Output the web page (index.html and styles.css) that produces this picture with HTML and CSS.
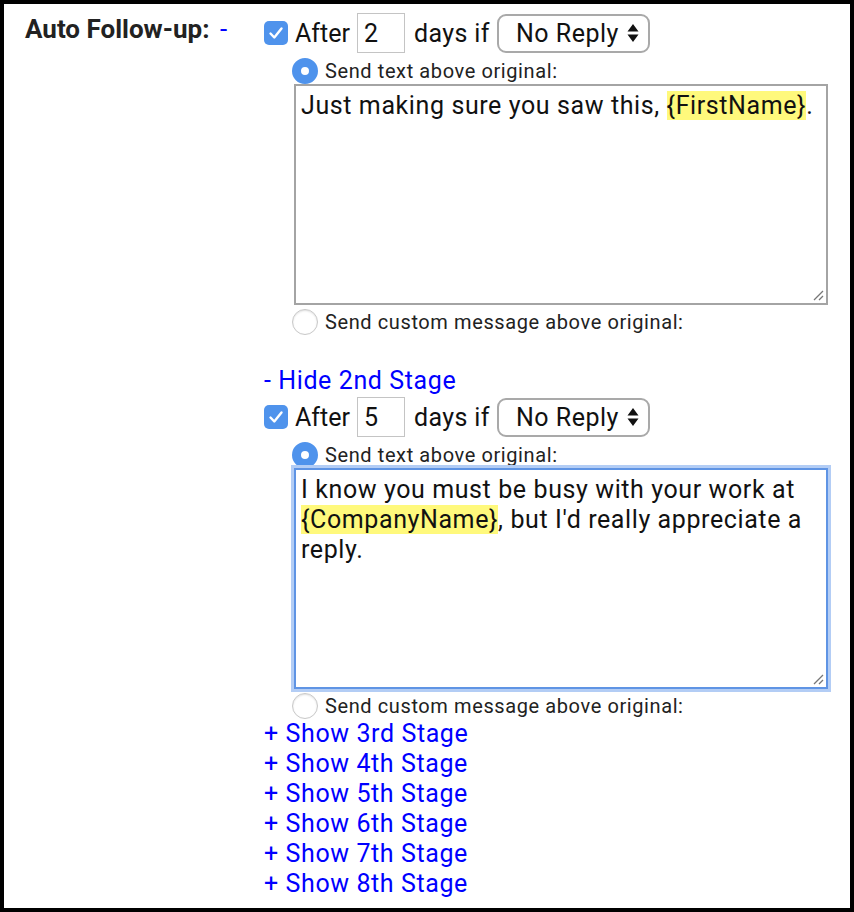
FILE: index.html
```html
<!DOCTYPE html>
<html lang="en">
<head>
    <meta charset="UTF-8">
    <title>Auto Follow-up</title>
    <link rel="stylesheet" href="styles.css">
</head>
<body>
<div class="frame">
    <div class="setting">
        <div class="setting-label">Auto Follow-up: <a class="toggle">-</a></div>

        <div class="setting-body">

            <div class="stage">
                <div class="stage-rule">
                    <span class="check"><svg width="24" height="24" viewBox="0 0 24 24"><path d="M6.5 12.5l3.8 4 7.2-9" fill="none" stroke="#fff" stroke-width="2.4" stroke-linecap="round" stroke-linejoin="round"/></svg></span>
                    <span class="word">After</span>
                    <input class="days" type="text" value="2">
                    <span class="word days-if">days if</span>
                    <div class="select">No Reply
                        <svg class="arrows" width="12" height="22" viewBox="0 0 12 22"><path d="M6 2l5.5 7.5H0.5z M6 20l5.5-7.5H0.5z" fill="#111"/></svg>
                    </div>
                </div>
                <div class="options">
                    <div class="option"><span class="radio on"></span>Send text above original:</div>
                    <div class="message">Just making sure you saw this, <mark>{FirstName}</mark>.
                        <svg class="grip" width="12" height="12" viewBox="0 0 12 12"><path d="M11 2L2 11M11 7L7 11" stroke="#777" stroke-width="1.3"/></svg>
                    </div>
                    <div class="option"><span class="radio"></span>Send custom message above original:</div>
                </div>
            </div>

            <a class="stage-link hide-link">- Hide 2nd Stage</a>

            <div class="stage">
                <div class="stage-rule">
                    <span class="check"><svg width="24" height="24" viewBox="0 0 24 24"><path d="M6.5 12.5l3.8 4 7.2-9" fill="none" stroke="#fff" stroke-width="2.4" stroke-linecap="round" stroke-linejoin="round"/></svg></span>
                    <span class="word">After</span>
                    <input class="days" type="text" value="5">
                    <span class="word days-if">days if</span>
                    <div class="select">No Reply
                        <svg class="arrows" width="12" height="22" viewBox="0 0 12 22"><path d="M6 2l5.5 7.5H0.5z M6 20l5.5-7.5H0.5z" fill="#111"/></svg>
                    </div>
                </div>
                <div class="options">
                    <div class="option"><span class="radio on"></span>Send text above original:</div>
                    <div class="message focused">I know you must be busy with your work at <mark>{CompanyName}</mark>, but I'd really appreciate a reply.
                        <svg class="grip" width="12" height="12" viewBox="0 0 12 12"><path d="M11 2L2 11M11 7L7 11" stroke="#777" stroke-width="1.3"/></svg>
                    </div>
                    <div class="option"><span class="radio"></span>Send custom message above original:</div>
                </div>
            </div>

            <a class="stage-link">+ Show 3rd Stage</a>
            <a class="stage-link">+ Show 4th Stage</a>
            <a class="stage-link">+ Show 5th Stage</a>
            <a class="stage-link">+ Show 6th Stage</a>
            <a class="stage-link">+ Show 7th Stage</a>
            <a class="stage-link">+ Show 8th Stage</a>

        </div>
    </div>
</div>
</body>
</html>
```

FILE: styles.css
```css
body{
    margin: 0;
    font-family: Roboto, "Liberation Sans", sans-serif;
    color: #111;
}
.frame{
    width: 854px;
    height: 912px;
    box-sizing: border-box;
    border: 4px solid #000;
    background: #fff;
    overflow: hidden;
}
.setting{
    display: flex;
}
.setting-label{
    width: 239px;
    padding-left: 21px;
    padding-top: 10px;
    font-size: 26px;
    font-weight: bold;
    color: #222;
}
.toggle{
    font-weight: normal;
    color: #0000ff;
    margin-left: 4px;
}
.setting-body{
    display: flex;
    flex-direction: column;
    padding-top: 9px;
}
.stage-rule{
    display: flex;
    align-items: center;
    gap: 7px;
    font-size: 25px;
    height: 40px;
}
.days-if{
    margin-left: 2px;
    letter-spacing: 0.4px;
}
.check{
    width: 24px;
    height: 24px;
    border-radius: 5px;
    background: #4f93ec;
    display: flex;
}
.days{
    width: 48px;
    height: 40px;
    box-sizing: border-box;
    border: 1px solid #c4c4c4;
    padding: 0 6px;
    font-family: inherit;
    font-size: 25px;
    color: #111;
    outline: none;
}
.select{
    width: 153px;
    height: 39px;
    box-sizing: border-box;
    border: 2px solid #a9a9a9;
    border-radius: 9px;
    padding-left: 17px;
    display: flex;
    align-items: center;
    gap: 8px;
    letter-spacing: 0.5px;
}
.options{
    margin-left: 28px;
    margin-top: 5px;
}
.option{
    display: flex;
    align-items: center;
    gap: 7px;
    height: 26px;
    font-size: 20px;
    letter-spacing: 0.6px;
    color: #222;
}
.radio{
    width: 26px;
    height: 26px;
    box-sizing: border-box;
    border-radius: 50%;
    border: 1px solid #c8c8c8;
    background: #fff;
    box-shadow: inset 0 1px 2px rgba(0,0,0,0.12);
}
.radio.on{
    border: 9px solid #4f93ec;
    box-shadow: none;
}
.message{
    position: relative;
    margin-left: 2px;
    width: 534px;
    height: 221px;
    box-sizing: border-box;
    border: 2px solid #a4a4a4;
    padding: 5px 5px;
    font-size: 25px;
    letter-spacing: 0.6px;
    line-height: 30px;
    margin-bottom: 4px;
}
.message.focused{
    border-color: #5f94e4;
    box-shadow: 0 0 0 3px #b3cdf5;
}
mark{
    background: #fff97c;
    color: inherit;
}
.grip{
    position: absolute;
    right: 2px;
    bottom: 2px;
}
.stage-link{
    font-size: 25px;
    letter-spacing: 0.6px;
    line-height: 30px;
    color: #0000ff;
}
.hide-link{
    margin-top: 31px;
    margin-bottom: 1px;
}
```
